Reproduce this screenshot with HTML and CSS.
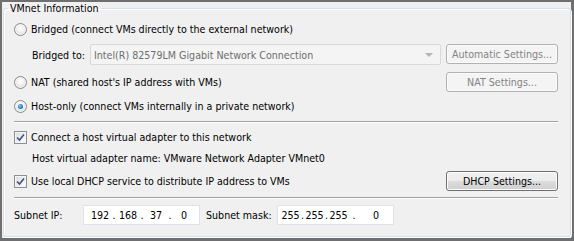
FILE: index.html
```html
<!DOCTYPE html>
<html>
<head>
<meta charset="utf-8">
<link rel="stylesheet" href="styles.css">
</head>
<body>
<div class="frame">
  <fieldset class="group">
    <legend class="legend">VMnet Information</legend>
    <div class="body">
      <div class="row r1">
        <span class="radio"></span><span class="lbl">Bridged (connect VMs directly to the external network)</span>
      </div>
      <div class="row r2">
        <span class="sublbl">Bridged to:</span>
        <div class="select">Intel(R) 82579LM Gigabit Network Connection<span class="arrow"></span></div>
        <button class="btn" disabled>Automatic Settings...</button>
      </div>
      <div class="row r3">
        <span class="radio"></span><span class="lbl">NAT (shared host's IP address with VMs)</span>
        <button class="btn" disabled>NAT Settings...</button>
      </div>
      <div class="row r4">
        <span class="radio on"></span><span class="lbl">Host-only (connect VMs internally in a private network)</span>
      </div>
      <div class="sep s1"></div>
      <div class="row r5">
        <span class="check"><svg width="9" height="9" viewBox="0 0 9 9"><path d="M1 4.5 L3.5 7 L8 1.5" fill="none" stroke="#3d5488" stroke-width="1.6"/></svg></span><span class="lbl">Connect a host virtual adapter to this network</span>
      </div>
      <div class="row r6">
        <span class="sublbl">Host virtual adapter name: VMware Network Adapter VMnet0</span>
      </div>
      <div class="row r7">
        <span class="check"><svg width="9" height="9" viewBox="0 0 9 9"><path d="M1 4.5 L3.5 7 L8 1.5" fill="none" stroke="#3d5488" stroke-width="1.6"/></svg></span><span class="lbl">Use local DHCP service to distribute IP address to VMs</span>
        <button class="btn primary">DHCP Settings...</button>
      </div>
      <div class="sep s2"></div>
      <div class="row r8">
        <span class="flbl ip-lbl">Subnet IP:</span>
        <div class="ipfield ip">
          <span class="seg">192</span><span class="dot">.</span><span class="seg">168</span><span class="dot">.</span><span class="seg">37</span><span class="dot">.</span><span class="seg">0</span>
        </div>
        <span class="flbl mask-lbl">Subnet mask:</span>
        <div class="ipfield mask">
          <span class="seg">255</span><span class="dot">.</span><span class="seg">255</span><span class="dot">.</span><span class="seg">255</span><span class="dot wide">.</span><span class="seg last">0</span>
        </div>
      </div>
    </div>
  </fieldset>
</div>
</body>
</html>
```

FILE: styles.css
```css
html, body {
  margin: 0;
  padding: 0;
  background: #f0f0f0;
}

body {
  font-family: "DejaVu Sans Condensed", "DejaVu Sans", sans-serif;
  font-stretch: condensed;
  font-size: 10.6px;
  color: #000;
}

.frame {
  width: 574px;
  height: 241px;
  box-sizing: border-box;
  border-style: solid;
  border-color: #6f6f6f;
  border-width: 2px 3px 3px 2px;
  background: #f0f0f0;
  display: flex;
  flex-direction: column;
}

.group {
  flex: 1;
  margin: 0 0 1px 1px;
  padding: 0 12px 0 10px;
  border: 1px solid #d5dfe5;
  border-radius: 3px;
  box-shadow: inset 1px 1px 0 #fff, 1px 1px 0 #fff;
  min-width: 0;
}

.legend {
  padding: 0 2px;
  margin-left: -6px;
  line-height: 13px;
  height: 13px;
}

.body {
  display: flex;
  flex-direction: column;
  padding-top: 4px;
}

.row {
  display: flex;
  align-items: center;
  height: 20px;
}

.r2 { height: 21px; margin-top: 5px; }
.r3 { margin-top: 7px; }
.r4 { margin-top: 4px; }
.r5 { margin-top: 4px; }
.r6 { margin-top: 1px; }
.r7 { margin-top: 3px; }
.r8 { margin-top: 6px; }

.sep {
  height: 0;
  border-top: 1px solid #a0a0a0;
  border-bottom: 1px solid #fff;
}
.s1 { margin-top: 5px; }
.s2 { margin-top: 6px; }

.radio {
  width: 13px;
  height: 13px;
  box-sizing: border-box;
  border-radius: 50%;
  border: 1px solid #8a8a8a;
  background: radial-gradient(circle at 50% 40%, #ffffff 0%, #f4f4f4 35%, #d6d6d6 80%, #cfcfcf 100%);
  box-shadow: inset 0 0 0 1px #f6f6f6;
  position: relative;
  flex: none;
}

.radio.on::after {
  content: "";
  position: absolute;
  left: 3px;
  top: 3px;
  width: 5px;
  height: 5px;
  border-radius: 50%;
  background: radial-gradient(circle at 40% 40%, #8fd0f5 0%, #2a86c8 50%, #0c4d8a 100%);
}

.check {
  width: 13px;
  height: 13px;
  box-sizing: border-box;
  border: 1px solid #8e8f8f;
  background: linear-gradient(135deg, #dcdcdc, #fdfdfd);
  box-shadow: inset 0 0 0 1px #f4f4f4;
  display: flex;
  align-items: center;
  justify-content: center;
  flex: none;
}

.lbl {
  margin-left: 4px;
  white-space: nowrap;
}

.sublbl {
  margin-left: 18px;
  white-space: nowrap;
}

.r2 .sublbl {
  width: 58px;
  flex: none;
}

.select {
  width: 351px;
  height: 21px;
  box-sizing: border-box;
  border: 1px solid #d9d9d9;
  border-radius: 2px;
  background: #f4f4f4;
  color: #6d6d6d;
  padding-left: 3px;
  display: flex;
  align-items: center;
  position: relative;
  flex: none;
}

.arrow {
  position: absolute;
  right: 7px;
  top: 8px;
  width: 0;
  height: 0;
  border-left: 4px solid transparent;
  border-right: 4px solid transparent;
  border-top: 4px solid #b4b4b4;
}

.btn {
  margin-left: auto;
  width: 112px;
  height: 20px;
  box-sizing: border-box;
  border: 1px solid #b1b1b1;
  border-radius: 3px;
  background: #f4f4f4;
  box-shadow: inset 0 0 0 1px #fbfbfb;
  color: #838383;
  font: inherit;
  padding: 0;
  flex: none;
}

.r2 .btn { align-self: flex-start; }

.btn.primary {
  border-color: #707070;
  color: #000;
  background: linear-gradient(#f2f2f2 0%, #ebebeb 50%, #dddddd 51%, #cfcfcf 100%);
  box-shadow: inset 0 0 0 1px #fcfcfc;
}

.flbl {
  white-space: nowrap;
  flex: none;
}
.ip-lbl { width: 69px; }
.mask-lbl { width: 71px; margin-left: 6px; }

.ipfield {
  width: 117px;
  height: 20px;
  box-sizing: border-box;
  border: 1px solid #e2e3ea;
  background: #fff;
  display: flex;
  align-items: center;
  flex: none;
}

.ip { padding-left: 6px; }
.ip .seg { width: 20px; text-align: center; }
.ip .dot { width: 8px; text-align: center; }

.mask { padding-left: 3px; }
.mask .seg { width: 19px; text-align: center; }
.mask .dot { width: 5px; text-align: center; }
.mask .dot.wide { width: 12px; }
.mask .seg.last { width: 32px; }
```
